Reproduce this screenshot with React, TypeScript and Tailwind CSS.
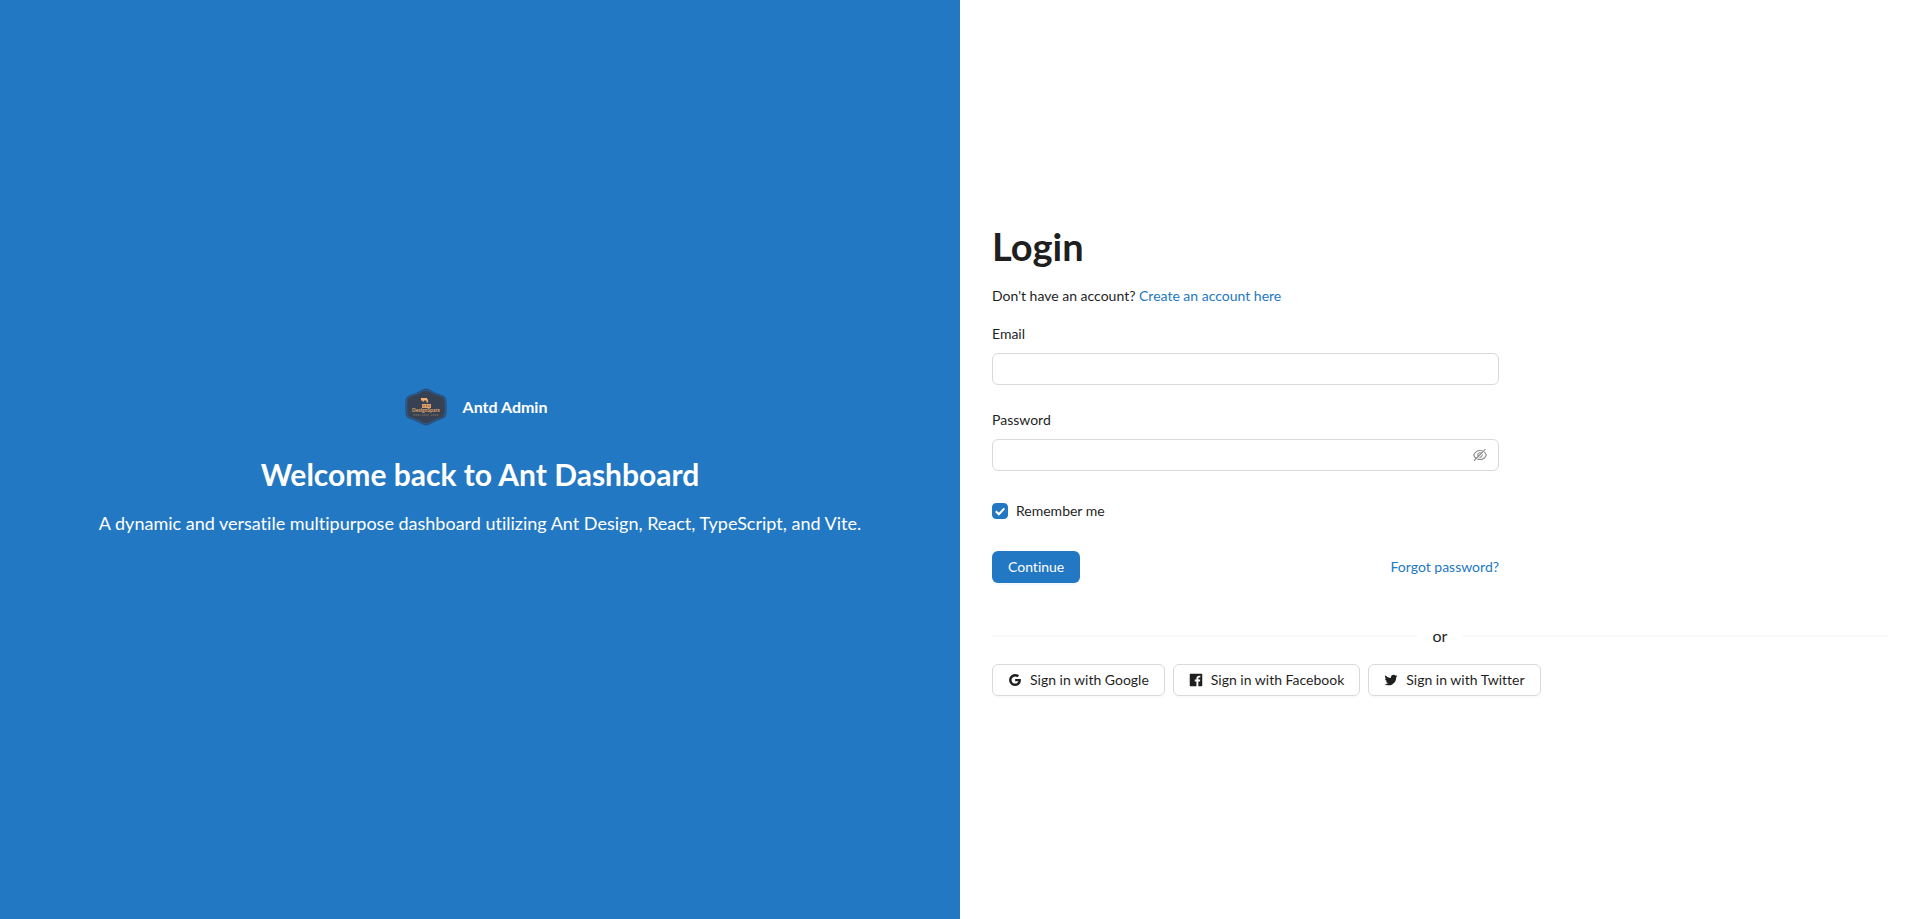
import { useState } from "react";
import type { ReactNode } from "react";
import {
  AiFillFacebook,
  AiOutlineEye,
  AiOutlineEyeInvisible,
  AiOutlineGoogle,
  AiOutlineTwitter,
} from "react-icons/ai";

// Trims the empty margin that the icon set keeps round each glyph.
const iconProps = { size: 14, viewBox: "64 64 896 896" };

function Logo() {
  return (
    <svg viewBox="0 0 42 38" className="h-[38px] w-[42px]" role="img" aria-label="DesignSparx">
      <path
        d="M18 1.2Q21 -.4 24 1.2Q30 5 37 7Q41 8.500 41.400 12Q42 19 41.400 26Q41 29.500 37 31Q30 33 24 36.800Q21 38.400 18 36.800Q12 33 5 31Q1 29.500 .6 26Q0 19 .6 12Q1 8.500 5 7Q12 5 18 1.200Z"
        fill="#2b4e79"
      />
      <path
        d="M18.500 2.800Q21 1.500 23.500 2.800Q30 6.400 36.500 8.300Q39.500 9.500 40 12.500Q40.400 19 40 25.500Q39.500 28.500 36.500 29.700Q30 31.600 23.500 35.200Q21 36.500 18.500 35.200Q12 31.600 5.500 29.700Q2.500 28.500 2 25.500Q1.600 19 2 12.500Q2.500 9.500 5.500 8.300Q12 6.400 18.500 2.800Z"
        fill="#374151"
        stroke="#2869a5"
        strokeWidth=".7"
      />
      <path d="M16 10h6v1.200h1v3.200h-1.500v-2H19v1h-1.500v-1H16Z" fill="#f0b071" />
      <path d="M17 16h9v4h-9Z" fill="#e0a168" />
      <path d="M19 17v2M21.500 16.500v2M24 17v2" stroke="#5b5350" strokeWidth=".7" />
      <text x="21" y="24.200" textAnchor="middle" fontSize="5" fontWeight="700" fill="#e2a46b">
        DesignSparx
      </text>
      <path d="M8.500 27h7M17 27h7M26 27h8" stroke="#8a7566" strokeWidth="1" strokeDasharray="1.500 .5" />
    </svg>
  );
}

function SocialButton({ icon, children }: { icon: ReactNode; children: ReactNode }) {
  return (
    <button
      type="button"
      className="flex h-8 items-center gap-2 rounded-md border border-[#d9d9d9] bg-white px-[15px] shadow-[0_2px_0_rgba(0,0,0,0.02)]"
    >
      {icon}
      <span>{children}</span>
    </button>
  );
}

const inputClass =
  "h-8 w-full rounded-md border border-[#d9d9d9] bg-white px-[11px] outline-none focus:border-[#2378c3]";

export default function App() {
  const [visible, setVisible] = useState(false);

  return (
    <div className="grid min-h-screen grid-cols-1 bg-white font-['Lato',sans-serif] text-sm leading-[22px] text-[#1f1f1f] [font-variant-ligatures:none] lg:grid-cols-2">
      <section className="flex flex-col items-center justify-center bg-[#2378c3] p-8 text-center text-white">
        <div className="flex h-12 items-center gap-2">
          <Logo />
          <h5 className="px-2 text-base font-bold">Antd Admin</h5>
        </div>
        <h2 className="mt-6 text-[30px] font-bold leading-[38px]">Welcome back to Ant Dashboard</h2>
        <p className="mt-4 text-lg leading-7">
          A dynamic and versatile multipurpose dashboard utilizing Ant Design, React, TypeScript, and Vite.
        </p>
      </section>

      <main className="flex flex-col justify-center p-8">
        <h1 className="text-[38px] font-bold leading-[46px]">Login</h1>
        <p className="mt-4">
          Don't have an account?{" "}
          <a href="#signup" className="text-[#2378c3]">
            Create an account here
          </a>
        </p>

        <form className="mt-4 flex w-full max-w-[507px] flex-col gap-6" onSubmit={(e) => e.preventDefault()}>
          <div className="flex flex-col gap-2">
            <label htmlFor="email">Email</label>
            <input id="email" type="email" className={inputClass} />
          </div>
          <div className="flex flex-col gap-2">
            <label htmlFor="password">Password</label>
            <div className="flex h-8 items-center rounded-md border border-[#d9d9d9] px-[11px] focus-within:border-[#2378c3]">
              <input id="password" type={visible ? "text" : "password"} className="min-w-0 flex-1 outline-none" />
              <button
                type="button"
                aria-label={visible ? "Hide password" : "Show password"}
                className="text-[#8c8c8c]"
                onClick={() => setVisible(!visible)}
              >
                {visible ? <AiOutlineEye {...iconProps} /> : <AiOutlineEyeInvisible {...iconProps} />}
              </button>
            </div>
          </div>
          <label className="flex h-8 items-center gap-2">
            <span className="grid size-4">
              <input
                type="checkbox"
                defaultChecked
                className="peer col-start-1 row-start-1 size-4 appearance-none rounded border border-[#d9d9d9] checked:border-[#2378c3] checked:bg-[#2378c3]"
              />
              <svg
                viewBox="0 0 16 16"
                className="pointer-events-none invisible col-start-1 row-start-1 size-4 peer-checked:visible"
                fill="none"
                stroke="#fff"
                strokeWidth="2"
              >
                <path d="M3.800 8.200L6.900 11.300L12.300 5.400" />
              </svg>
            </span>
            Remember me
          </label>
          <div className="flex items-center justify-between">
            <button
              type="submit"
              className="h-8 rounded-md bg-[#2378c3] px-4 text-white shadow-[0_2px_0_rgba(5,145,255,0.05)]"
            >
              Continue
            </button>
            <a href="#reset" className="text-[#2378c3]">
              Forgot password?
            </a>
          </div>
        </form>

        <div className="mb-4 mt-10 flex items-center gap-4 text-base leading-[25px]">
          <span className="h-0.5 flex-1 bg-[#f8f8f8]" />
          <span>or</span>
          <span className="h-0.5 flex-1 bg-[#f8f8f8]" />
        </div>

        <div className="flex flex-wrap gap-2">
          <SocialButton icon={<AiOutlineGoogle {...iconProps} />}>Sign in with Google</SocialButton>
          <SocialButton icon={<AiFillFacebook {...iconProps} />}>Sign in with Facebook</SocialButton>
          <SocialButton icon={<AiOutlineTwitter {...iconProps} />}>Sign in with Twitter</SocialButton>
        </div>
      </main>
    </div>
  );
}
